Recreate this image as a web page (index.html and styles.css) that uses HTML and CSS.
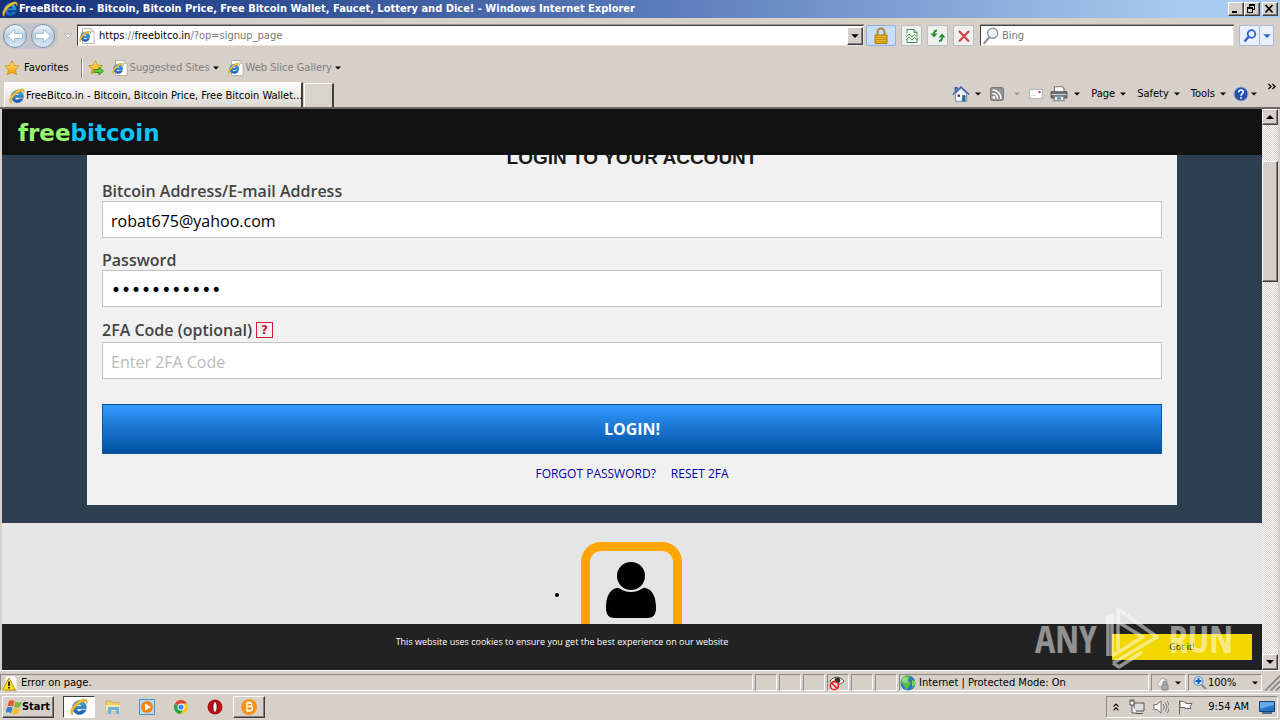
FILE: index.html
```html
<!DOCTYPE html>
<html lang="en">
<head>
<meta charset="utf-8">
<title>FreeBitco.in - Windows Internet Explorer</title>
<link rel="stylesheet" href="styles.css">
</head>
<body>
<svg class="defs" aria-hidden="true">
  <defs>
    <linearGradient id="orb" x1="0" y1="0" x2="0" y2="1"><stop offset="0" stop-color="#f4f9fd"/><stop offset=".5" stop-color="#b9cfe2"/><stop offset="1" stop-color="#dcecf8"/></linearGradient>
    <linearGradient id="ieblue" x1="0" y1="0" x2="0" y2="1"><stop offset="0" stop-color="#45b4ee"/><stop offset="1" stop-color="#1457b0"/></linearGradient>
    <linearGradient id="starfill" x1="0" y1="0" x2="0" y2="1"><stop offset="0" stop-color="#ffe680"/><stop offset="1" stop-color="#f5a000"/></linearGradient>
    <symbol id="ie" viewBox="0 0 16 16">
      <path d="M8.300 2.300a6.200 6.200 0 1 0 5.900 8.400h-3.900c-1.200 1.900-4.300 1.300-4.400-1.200h8.600C14.800 5.500 12 2.300 8.300 2.300zM5.900 7.300c.4-2.400 4.400-2.400 4.700 0z" fill="url(#ieblue)" stroke="#15529c" stroke-width=".4"/>
      <path d="M2.600 15.200C-1.500 14.800.8 7.500 6.800 3.200 10.500.5 15.300-.4 15.500 3c0 1-.3 1.700-.8 2.500.3-2.300-1.100-3.200-4-1.700C5.800 6.300 1.300 12 2.600 15.200z" fill="#f3c02a" stroke="#9a8420" stroke-width=".3"/>
    </symbol>
    <symbol id="iepage" viewBox="0 0 16 16">
      <path d="M3.500.5h8.500l3 3v12h-11.500z" fill="#fff" stroke="#a8a8a8" stroke-width=".8"/><path d="M12 .5v3h3" fill="#ddd" stroke="#a8a8a8" stroke-width=".6"/>
      <use href="#ie" x="0" y="2.500" width="12" height="12"/>
    </symbol>
    <symbol id="star" viewBox="0 0 16 16"><path d="M8 .8l2.200 4.700 5.100.6-3.800 3.500 1 5.100L8 12.200l-4.500 2.500 1-5.100L.7 6.100l5.100-.6z" fill="url(#starfill)" stroke="#c98500" stroke-width=".8"/></symbol>
    <symbol id="down" viewBox="0 0 8 8"><path d="M1 2.500h6L4 5.500z" fill="currentColor"/></symbol>
  </defs>
</svg>

<header class="titlebar">
  <svg class="i16"><use href="#ie"/></svg>
  <h1 class="titletext">FreeBitco.in - Bitcoin, Bitcoin Price, Free Bitcoin Wallet, Faucet, Lottery and Dice! - Windows Internet Explorer</h1>
  <div class="winbtns">
    <button class="winbtn" aria-label="Minimize"><svg viewBox="0 0 12 10"><path d="M3 7h5v2H3z"/></svg></button>
    <button class="winbtn" aria-label="Restore"><svg viewBox="0 0 12 10"><path d="M4 0h6v6H8V5h1V2H5v1H4zM2 3h6v6H2zM3 5v3h4V5z" fill-rule="evenodd"/></svg></button>
    <button class="winbtn close" aria-label="Close"><svg viewBox="0 0 12 10"><path d="M2.500 1l7 7.500M9.500 1l-7 7.500" stroke="#000" stroke-width="1.700"/></svg></button>
  </div>
</header>

<nav class="navbar" aria-label="Navigation">
  <div class="orbs">
    <button class="orb" aria-label="Back"><svg viewBox="0 0 26 26"><circle cx="13" cy="13" r="11.500" fill="url(#orb)" stroke="#7d8fa3"/><path d="M5.500 13l7-6.500v4H20.500v5h-8v4z" fill="#fff" stroke="#8fa6bd" stroke-width=".7"/></svg></button>
    <button class="orb" aria-label="Forward"><svg viewBox="0 0 26 26"><circle cx="13" cy="13" r="11.500" fill="url(#orb)" stroke="#7d8fa3"/><path d="M20.500 13l-7-6.500v4H5.500v5h8v4z" fill="#fff" stroke="#8fa6bd" stroke-width=".7"/></svg></button>
  </div>
  <button class="plain recent" aria-label="Recent pages"><svg class="i10" viewBox="0 0 10 8"><path d="M1 2h8L5 6z" fill="#eee" stroke="#aaa" stroke-width=".8"/></svg></button>
  <div class="address">
    <svg class="i16"><use href="#iepage"/></svg>
    <a class="url" href="#"><span class="dark">https</span>://<span class="dark">freebitco.in</span>/?op=signup_page</a>
    <button class="raised drop" aria-label="Address list"><svg class="i10"><use href="#down"/></svg></button>
  </div>
  <button class="tool lock" aria-label="Security report"><svg class="i18" viewBox="0 0 18 18"><path d="M5.500 9V5a3.500 3.500 0 0 1 7 0v4" fill="none" stroke="#a88a48" stroke-width="2"/><path d="M3 8h12v8.500H3z" fill="#f0b429" stroke="#a87808"/><path d="M3.500 10.500h11M3.500 12.500h11M3.500 14.500h11" stroke="#c88c10"/></svg></button>
  <button class="tool" aria-label="Compatibility view"><svg class="i16" viewBox="0 0 16 16"><path d="M3 5.500V1.500h7L13 4.500v3M3 11v3.500h10V10" fill="#fff" stroke="#3c9a4a"/><path d="M10 1.500v3h3M2 9l3-3 3 3 2.500-2.500L13.500 9M2 12l3-3 3 3 2.500-2.500 3 2.500" fill="none" stroke="#3c9a4a"/></svg></button>
  <button class="tool" aria-label="Refresh"><svg class="i16" viewBox="0 0 16 16"><path d="M7 2.500c-2.500 0-3 1-3 3.500M9 13c2.500 0 3-1 3-3.500" fill="none" stroke="#249034" stroke-width="2"/><path d="M.5 5.500h7L4 9.500zM8.500 9.500h7L12 5.500z" fill="#249034"/></svg></button>
  <button class="tool" aria-label="Stop"><svg class="i16" viewBox="0 0 16 16"><path d="M3 3l10 10.500M13 3L3 13.500" stroke="#d0414b" stroke-width="2.200"/></svg></button>
  <div class="search">
    <svg class="i18" viewBox="0 0 16 16"><circle cx="9.500" cy="5.500" r="4.500" fill="#eaf3fc" stroke="#8794a3" stroke-width="1.200"/><path d="M6.500 9l-5 6" stroke="#8a8a8a" stroke-width="1.800"/></svg>
    <input class="searchfield" type="text" placeholder="Bing" aria-label="Search">
  </div>
  <div class="searchbtns">
    <button class="go" aria-label="Go"><svg class="i16" viewBox="0 0 16 16"><circle cx="9.500" cy="6" r="3.800" fill="none" stroke="#2a62d0" stroke-width="1.800"/><path d="M6.500 9L2.500 13.500" stroke="#2a62d0" stroke-width="2.400"/></svg></button>
    <button class="go more" aria-label="Search options"><svg class="i10"><use href="#down"/></svg></button>
  </div>
</nav>

<div class="favbar">
  <button class="plain fav"><svg class="i16"><use href="#star"/></svg>Favorites</button>
  <span class="divider"></span>
  <button class="plain addfav" aria-label="Add to favorites"><svg class="i16" viewBox="0 0 16 16"><use href="#star" width="15" height="15"/><path d="M6 9.500h5V7l4.500 4-4.500 4v-2.500H6z" fill="#5fc93c" stroke="#2c8a1c" stroke-width=".8"/></svg></button>
  <button class="plain dim"><svg class="i16"><use href="#iepage"/></svg>Suggested Sites<svg class="i8"><use href="#down"/></svg></button>
  <button class="plain dim"><svg class="i16"><use href="#iepage"/></svg>Web Slice Gallery<svg class="i8"><use href="#down"/></svg></button>
</div>

<div class="tabbar">
  <button class="tab"><svg class="i16"><use href="#ie"/></svg><span class="tabtext">FreeBitco.in - Bitcoin, Bitcoin Price, Free Bitcoin Wallet...</span></button>
  <button class="newtab" aria-label="New tab"></button>
  <div class="commands">
    <button class="plain cmd tight" aria-label="Home"><svg class="i18" viewBox="0 0 16 16"><path d="M3 8v6.500h10V8L8 3z" fill="#f4f6fb" stroke="#6d82aa" stroke-width=".8"/><path d="M.8 8.500L8 1.800l7.200 6.700M3 6V2.500h1.500V4" fill="none" stroke="#405fa6" stroke-width="1.300"/><path d="M9 9h3v5.500H9z" fill="#25699c"/><path d="M5 8.500h2v2H5z" fill="#333"/></svg><svg class="i8"><use href="#down"/></svg></button>
    <button class="plain cmd off tight" aria-label="Feeds"><svg class="i16" viewBox="0 0 16 16"><rect x="1.500" y="1.500" width="13" height="13" rx="2" fill="#929292" stroke="#777"/><circle cx="4.800" cy="11.500" r="1.400" fill="#fff"/><path d="M3.500 7.500c3 0 5 2 5 5.500M3.500 4c5 0 8.500 3.500 8.500 9" fill="none" stroke="#fff" stroke-width="1.500"/></svg><svg class="i8"><use href="#down"/></svg></button>
    <button class="plain cmd" aria-label="Read mail"><svg class="i16" viewBox="0 0 16 16"><path d="M1.500 3.500h13v9h-13z" fill="#fff" stroke="#b5b5b5"/><path d="M10.500 5h2v2h-2z" fill="#d34"/><path d="M3 9.500h5" stroke="#ddd"/></svg></button>
    <button class="plain cmd print" aria-label="Print"><svg class="i18" viewBox="0 0 16 16"><path d="M4 1.500h7l1.500 2V7H4z" fill="#fff" stroke="#777"/><path d="M1 6h14v5.500H1z" fill="#70747b" stroke="#444" stroke-width=".8"/><path d="M1.500 8.500h13" stroke="#c7cdd4"/><path d="M4 10h8l.5 4h-9z" fill="#fff" stroke="#777"/><path d="M6 11h4v2H6z" fill="#438bb3"/></svg><svg class="i8"><use href="#down"/></svg></button>
    <button class="plain cmd">Page<svg class="i8"><use href="#down"/></svg></button>
    <button class="plain cmd">Safety<svg class="i8"><use href="#down"/></svg></button>
    <button class="plain cmd">Tools<svg class="i8"><use href="#down"/></svg></button>
    <button class="plain cmd help" aria-label="Help"><svg class="i16" viewBox="0 0 16 16"><circle cx="8" cy="8" r="7" fill="#254fae" stroke="#9aa9c9"/><path d="M5.800 6.200c0-3 4.800-2.800 4.500-.2C10.200 7.500 8 7.700 8 9.700M8 11v1.800" fill="none" stroke="#fff" stroke-width="1.600"/></svg><svg class="i8"><use href="#down"/></svg></button>
    <button class="plain chevrons" aria-label="More commands"><svg class="i10" viewBox="0 0 10 10"><path d="M1.500 2l2.500 2.500L1.500 7M5.500 2L8 4.500 5.500 7" fill="none" stroke="#000" stroke-width="1.300"/></svg></button>
  </div>
</div>

<div class="viewport">
  <div class="site">
    <div class="sitehead"><a class="logo" href="#"><span class="green">free</span><span class="cyan">bitcoin</span></a></div>
    <main class="scrolled">
      <section class="hero">
        <form class="panel">
          <h2 class="heading">LOGIN TO YOUR ACCOUNT</h2>
          <div class="field"><label class="label" for="mail">Bitcoin Address/E-mail Address</label><input class="box" id="mail" type="text" value="robat675@yahoo.com"></div>
          <div class="field"><label class="label" for="pass">Password</label><input class="box pass" id="pass" type="password" value="abcdefghijk"></div>
          <div class="field"><div class="labelrow"><label class="label" for="code">2FA Code (optional)</label><button class="hint" type="button">?</button></div><input class="box" id="code" type="text" placeholder="Enter 2FA Code"></div>
          <button class="login" type="button">LOGIN!</button>
          <div class="links"><a class="link" href="#">FORGOT PASSWORD?</a><a class="link" href="#">RESET 2FA</a></div>
        </form>
      </section>
      <ul class="steps">
        <li class="step"><span class="avatar"><svg class="person" viewBox="0 0 52 56"><circle cx="26" cy="14" r="14"/><path d="M12 26c3-1 4 4 14 4s11-5 14-4c8 1 11 10 11 20 0 7-3 10-9 10H10c-6 0-9-3-9-10 0-10 3-19 11-20z"/></svg></span></li>
      </ul>
    </main>
    <div class="cookies"><p class="cookietext">This website uses cookies to ensure you get the best experience on our website</p><button class="gotit">Got it!</button></div>
  </div>
  <div class="scrollbar">
    <button class="raised sb" aria-label="Scroll up"><svg viewBox="0 0 8 8"><path d="M0 6h8L4 2z"/></svg></button>
    <div class="gapup"></div><div class="raised thumb"></div><div class="gapdown"></div>
    <button class="raised sb" aria-label="Scroll down"><svg viewBox="0 0 8 8"><path d="M0 2h8L4 6z"/></svg></button>
  </div>
  <div class="watermark">
    <span>ANY</span>
    <svg class="play" viewBox="0 0 56 64"><g fill="none" stroke="#fff" stroke-width="3.500" stroke-linejoin="round"><path d="M13 44V3l39 28L8 57M13 16l25 15-31 19M3 50V11l4-2v41M8 57l6 4 23-15"/></g></svg>
    <span>RUN</span>
  </div>
</div>

<footer class="status">
  <div class="cell grow"><svg class="i16" viewBox="0 0 16 16"><path d="M3 .5h9l3 3v12H3z" fill="#fff" stroke="#ccc"/><path d="M7 3l6.500 12H.5z" fill="#ffe31a" stroke="#b39500"/><path d="M7 6.500v4.500M7 12v1.600" stroke="#000" stroke-width="1.600"/></svg>Error on page.</div>
  <div class="cell slot"></div><div class="cell slot"></div><div class="cell slot"></div>
  <div class="cell slot"><svg class="i16" viewBox="0 0 18 18"><path d="M1 7c4-6 11-6 16 0-5 5-12 5-16 0z" fill="#fff" stroke="#333"/><circle cx="9.500" cy="6" r="3.200" fill="#333"/><circle cx="6" cy="12" r="4.500" fill="#f6dede" stroke="#d22" stroke-width="1.800"/><path d="M3 9l6 6" stroke="#d22" stroke-width="1.800"/></svg></div>
  <div class="cell slot"></div><div class="cell slot"></div>
  <div class="cell zone"><svg class="i16" viewBox="0 0 16 16"><circle cx="8" cy="8" r="7.500" fill="#2478c6"/><path d="M2 3c3-3 7-3 8-1L8 6l3 1-2 5-3 3C5 12 4 10 1 8z" fill="#5bbd45"/><path d="M12 5l3 1v4l-3 2z" fill="#78cf50"/><circle cx="5" cy="5" r="3" fill="#fff" opacity=".35"/></svg>Internet | Protected Mode: On</div>
  <div class="cell priv"><svg class="i16" viewBox="0 0 16 16"><path d="M2 9l5-6 5 2-1 6-6 1z" fill="#eee" stroke="#aaa"/><path d="M8 10V8a2 2 0 0 1 4 0v2M7 10h6v5H7z" fill="#aaa" stroke="#888"/></svg><svg class="i8"><use href="#down"/></svg></div>
  <div class="cell zoom"><svg class="i16" viewBox="0 0 16 16"><path d="M9 9l5 5" stroke="#888" stroke-width="2"/><circle cx="6.500" cy="6" r="4.500" fill="#dcecff" stroke="#4f82c4"/><path d="M6.500 3v6M3.500 6h6" stroke="#1460c4" stroke-width="2"/></svg>100%<svg class="i8 end"><use href="#down"/></svg></div>
  <svg class="grip" viewBox="0 0 12 12"><path d="M1 12L12 1M5 12l7-7M9 12l3-3" stroke="#808080" stroke-width="1.200"/></svg>
</footer>

<footer class="taskbar">
  <button class="raised start"><svg class="i16" viewBox="0 0 16 16"><path d="M3 2c2-1 4-1 5.500.2L7 7.500C5.500 6.500 3.500 6.500 1.500 7.200z" fill="#e8592b"/><path d="M9.500 2.700c2 1 4 .8 6 0L14 8c-2 .8-4 .8-6 0z" fill="#77b83b"/><path d="M1 8.500c2-1 4-.8 5.500.2L5 14c-1.500-1-3.500-1-5.500-.3z" fill="#3a80d0"/><path d="M7.500 9.200c2 1 4 .8 6 0L12 14.500c-2 .8-4 .8-6 0z" fill="#f5bd24"/></svg>Start</button>
  <div class="launch">
    <button class="task active" aria-label="Internet Explorer"><svg class="i18"><use href="#ie"/></svg></button>
    <button class="task" aria-label="Explorer"><svg class="i18" viewBox="0 0 18 18"><path d="M2 3h5l1 1.500h7V13H2z" fill="#edcf6d" stroke="#c9a53f" stroke-width=".7"/><path d="M2 7h14v6H2z" fill="#fae9a6"/><path d="M4 9h11v7h-3v-4H7v4H4z" fill="#67b4dc"/></svg></button>
    <button class="task" aria-label="Media Player"><svg class="i18" viewBox="0 0 18 18"><path d="M1.500 1.500h15v15h-15z" fill="#b9dcf5" stroke="#4f8fc7"/><circle cx="9" cy="9" r="6" fill="#f28518"/><path d="M7 5.500l6 3.500-6 3.500z" fill="#fff"/></svg></button>
    <button class="task" aria-label="Chrome"><svg class="i18" viewBox="0 0 18 18"><circle cx="9" cy="9" r="7" fill="#f5c92b"/><path d="M9 9L2.900 5.500A7 7 0 0 1 15.100 5.500H9z" fill="#dc4437"/><path d="M9 9l-6.100-3.500A7 7 0 0 0 8.500 16l3-5.500z" fill="#2da150"/><circle cx="9" cy="9" r="3.500" fill="#fff"/><circle cx="9" cy="9" r="2.600" fill="#4285f4"/></svg></button>
    <button class="task" aria-label="Opera"><svg class="i18" viewBox="0 0 18 18"><circle cx="9" cy="9" r="7.500" fill="#b81018"/><ellipse cx="9" cy="9" rx="2.200" ry="5.500" fill="#eee" stroke="#6b0508"/></svg></button>
    <button class="task raised" aria-label="Bitcoin"><svg class="i18" viewBox="0 0 18 18"><circle cx="9" cy="9" r="8" fill="#f7931a"/><path d="M7 5h3c2.500 0 2.500 3.500 0 3.500H7h3.500c2.500 0 2.500 4 0 4H7zM8 3.500V5M10 3.500V5M8 12.500V14M10 12.500V14" fill="none" stroke="#fff" stroke-width="1.300"/></svg></button>
  </div>
  <div class="tray">
    <svg class="i10" viewBox="0 0 10 12"><path d="M2 5.500L5 2.500l3 3M2 10l3-3 3 3" fill="none" stroke="#000" stroke-width="1.300"/></svg>
    <svg class="i16" viewBox="0 0 16 16"><path d="M5 4h10v8H5zM7 14.500h7" fill="#ddd" stroke="#555"/><path d="M1 1h4v5H1zM3 6v8h5M2 1v2M4 1v2" fill="#fff" stroke="#555"/></svg>
    <svg class="i16" viewBox="0 0 16 16"><path d="M1 5.500h3L8 2v12L4 10.500H1z" fill="#fff" stroke="#777"/><path d="M10 5c1.500 2 1.500 4 0 6M12 3.500c2.500 3 2.500 6 0 9M14 2c3 4 3 8 0 12" fill="none" stroke="#777"/></svg>
    <svg class="i16" viewBox="0 0 16 16"><path d="M2.500 15.500V1.500M3 2.500c3-1 4 1 6 1v1h6l-2 3 1 2H8v-1H3z" fill="#fff" stroke="#666"/></svg>
    <time class="clock">9:54 AM</time>
    <svg class="i16" viewBox="0 0 16 16"><path d="M.5 2.500h15v10H.5z" fill="#2873cc" stroke="#1d3e74"/><path d="M1 3h14v3L1 10z" fill="#65a8e8"/><path d="M3 14h10" stroke="#264c7c" stroke-width="1.500"/></svg>
  </div>
</footer>
</body>
</html>
```
FILE: styles.css
```css
* { box-sizing: border-box; }
body {
  margin: 0; height: 100vh; display: flex; flex-direction: column; overflow: hidden;
  background: #d6d0c8; color: #000; font: 11px/14px "DejaVu Sans Condensed", "DejaVu Sans", sans-serif;
}
button { font: inherit; color: inherit; margin: 0; padding: 0; }
svg { display: block; flex: none; }
.defs { position: absolute; width: 0; height: 0; }
.i8 { width: 8px; height: 8px; }
.i10 { width: 10px; height: 10px; }
.i16 { width: 16px; height: 16px; }
.i18 { width: 18px; height: 18px; }
.plain { border: 0; background: none; display: flex; align-items: center; gap: 4px; white-space: nowrap; }
.raised {
  border: 1px solid; border-color: #fff #404040 #404040 #fff; background: #d6d0c8;
  box-shadow: inset -1px -1px #808080; display: flex; align-items: center; justify-content: center;
}

.titlebar { flex: none; height: 18px; padding: 0 2px; display: flex; align-items: center; gap: 1px; background: linear-gradient(90deg, #16317a, #5475b5 48%, #a6caf0 92%); }
.titletext { flex: 1; margin: 0; color: #fff; font-size: 11px; font-weight: bold; white-space: nowrap; overflow: hidden; }
.winbtns { display: flex; }
.winbtn { width: 16px; height: 14px; border: 1px solid; border-color: #fff #404040 #404040 #fff; background: #d6d0c8; box-shadow: inset -1px -1px #808080; }
.winbtn svg { width: 12px; height: 10px; }
.close { margin-left: 2px; }

.navbar { flex: none; height: 35px; padding: 0 6px 0 2px; display: flex; align-items: center; }
.orbs { display: flex; gap: 2px; padding: 0 2px 0 0; border-radius: 13px; background: #c3c5ca; }
.orb { width: 26px; height: 26px; border: 0; background: none; }
.orb svg { width: 26px; height: 26px; }
.recent { width: 19px; justify-content: center; }
.address, .search { height: 21px; display: flex; align-items: center; background: #fff; border: 1px solid; border-color: #404040 #e8e4de #e8e4de #404040; box-shadow: 0 -1px #9a958c; }
.address { flex: 1; padding-left: 1px; gap: 4px; }
.url { flex: 1; color: #777; text-decoration: none; }
.dark { color: #000; }
.drop { width: 16px; height: 18px; }
.tool { width: 21px; height: 21px; margin-left: 5px; display: flex; align-items: center; justify-content: center; border: 1px solid #b9bcc2; border-radius: 2px; background: #f0f0ee; }
.lock { width: 30px; margin-left: 2px; background: #c9dcf8; border-color: #8fb0e0; }
.search { width: 254px; margin-left: 6px; padding-left: 1px; }
.searchfield { flex: 1; min-width: 0; border: 0; outline: 0; padding: 0 2px; background: none; font: inherit; }
.searchfield::placeholder { color: #777; }
.searchbtns { display: flex; margin-left: 5px; }
.go { width: 21px; height: 21px; display: flex; align-items: center; justify-content: center; border: 1px solid #a9b9d4; border-radius: 2px; background: #e9f0fa; color: #2a62d0; }
.more { width: 14px; border-left: 0; }

.favbar { flex: none; height: 29px; padding: 0 4px; display: flex; align-items: center; gap: 12px; }
.fav { gap: 4px; }
.addfav { margin-left: -7px; }
.dim { color: #808080; margin-left: -4px; gap: 2px; }
.dim .i8 { color: #000; }
.divider { width: 2px; height: 20px; border-left: 1px solid #8c8780; background: #fff; }

.tabbar { flex: none; height: 27px; padding-left: 4px; display: flex; align-items: stretch; border-bottom: 2px solid #6c6963; }
.tab { width: 299px; padding: 1px 2px 0 4px; border: 1px solid #fff; border-right: 2px solid #404040; border-bottom: 0; background: linear-gradient(#fff, #d9d5ce); display: flex; align-items: center; gap: 1px; white-space: nowrap; }
.tabtext { flex: 1; min-width: 0; text-align: left; }
.newtab { width: 30px; margin: 1px 0 0 1px; border: 1px solid #fff; border-right: 2px solid #404040; border-bottom: 0; background: #d8d3cb; }
.commands { flex: 1; display: flex; justify-content: flex-end; align-items: center; gap: 10px; padding: 0 3px 1px 0; }
.cmd { gap: 4px; }
.tight { margin-right: -3px; }
.off .i8 { color: #999; }
.off { gap: 8px; }
.print { margin-left: -4px; gap: 5px; }
.help { gap: 1px; margin: 0 -1px 0 -4px; }
.chevrons { align-self: flex-start; }

.viewport { position: relative; flex: 1; min-height: 0; display: flex; padding: 0 2px; border-bottom: 1px solid #fff; }
.site { position: relative; flex: 1; min-width: 0; display: flex; flex-direction: column; overflow: hidden; background: #e5e5e5; font-family: "Open Sans", "Noto Sans", sans-serif; }
.sitehead { position: relative; z-index: 1; flex: none; height: 46px; padding: 2px 16px 0; display: flex; align-items: center; background: #111; }
.logo { font: bold 23px/26px "DejaVu Sans", sans-serif; text-decoration: none; }
.green { color: #97f56f; }
.cyan { color: #0fc2fa; }
.scrolled { flex: 1; min-height: 0; margin-top: -20px; overflow: hidden; }
.hero { padding: 0 85px 18px; background: #2d3e50; }
.panel { padding: 11px 15px 21px; background: #f1f1f1; display: flex; flex-direction: column; }
.heading { margin: 0 0 11px; text-align: center; color: #1a1a1a; font: bold 19px/24px "Liberation Sans", Arial, sans-serif; }
.field { display: flex; flex-direction: column; margin-bottom: 12px; }
.label { color: #444; font-size: 16px; font-weight: 600; line-height: 20px; }
.labelrow { display: flex; align-items: center; gap: 4px; padding: 1px 0 2px; }
.hint { width: 17px; height: 16px; border: 1px solid #d01c38; background: none; color: #d01c38; font: bold 12px/14px "DejaVu Sans", sans-serif; }
.box { width: 100%; height: 37px; padding: 2px 8px 0; border: 1px solid #c4c4c4; border-radius: 0; outline: 0; background: #fff; color: #000; font: 16px "Open Sans", "Noto Sans", sans-serif; }
.box.pass { font: 17px "DejaVu Sans", sans-serif; }
.box::placeholder { color: #bbb; opacity: 1; }
.login { height: 50px; margin-top: 13px; border: 1px solid #0d56a2; background: linear-gradient(#3399ff, #004f9f); color: #fff; font-size: 16px; font-weight: bold; }
.links { display: flex; justify-content: center; gap: 15px; margin-top: 10px; }
.link { color: #0000a8; font-size: 12px; line-height: 20px; text-decoration: none; }
.steps { margin: 0; padding: 19px 53px 0 0; display: flex; justify-content: center; list-style: none; }
.step { display: flex; align-items: center; gap: 22px; margin-left: 25px; }
.step::before { content: ""; width: 4px; height: 4px; border-radius: 2px; background: #000; }
.avatar { width: 101px; height: 106px; border: 9px solid #ffa500; border-radius: 20px; display: flex; justify-content: center; padding-top: 11px; }
.person { width: 52px; height: 56px; }
.cookies { position: relative; flex: none; display: flex; padding: 10px; background: #222; color: #fff; }
.cookietext { flex: 1; margin: 0; text-align: center; font-size: 9px; line-height: 16px; }
.gotit { width: 140px; height: 26px; border: 0; background: #f1d600; color: #000; font-size: 9px; }

.scrollbar { flex: none; width: 16px; display: flex; flex-direction: column; background: repeating-conic-gradient(#fff 0 25%, #d6d0c8 0 50%) 0 0 / 2px 2px; }
.sb { height: 16px; }
.sb svg { width: 8px; height: 8px; }
.gapup { flex: 36; }
.thumb { flex: 119; }
.gapdown { flex: 373; }
.watermark { position: absolute; right: 47px; bottom: 0; height: 64px; display: flex; align-items: center; gap: 8px; opacity: .5; color: #fff; font: 300 38px/40px "Open Sans Condensed", "Roboto Condensed", "Liberation Sans Narrow", "Liberation Sans", sans-serif; pointer-events: none; }
.play { width: 56px; height: 64px; }

.status { flex: none; height: 23px; padding: 3px 0 2px; display: flex; gap: 2px; border-bottom: 1px solid #fff; }
.cell { display: flex; align-items: center; gap: 3px; padding-left: 1px; border: 1px solid; border-color: #8c8780 #fff #fff #8c8780; white-space: nowrap; }
.grow { flex: 1; }
.slot { width: 22px; }
.zone { width: 250px; padding-left: 0; }
.priv { width: 35px; padding-left: 3px; }
.zoom { width: 74px; padding-left: 3px; gap: 0; }
.end { margin: 0 2px 0 auto; }
.grip { width: 16px; align-self: stretch; }

.taskbar { flex: none; height: 26px; padding: 1px 2px 1px; display: flex; align-items: center; }
.start { width: 52px; height: 22px; font-weight: bold; font-size: 11px; }
.launch { flex: 1; display: flex; gap: 2px; margin-left: 9px; }
.task { width: 32px; height: 22px; display: flex; align-items: center; justify-content: center; border: 1px solid transparent; background: none; }
.task.raised { border-color: #fff #404040 #404040 #fff; }
.active { background: #fff; border-color: #404040 #fff #fff #404040; }
.tray { height: 22px; display: flex; align-items: center; gap: 8px; padding: 0 2px 0 4px; border: 1px solid; border-color: #8c8780 #fff #fff #8c8780; }
.clock { margin: 0 2px 0 7px; }
```
